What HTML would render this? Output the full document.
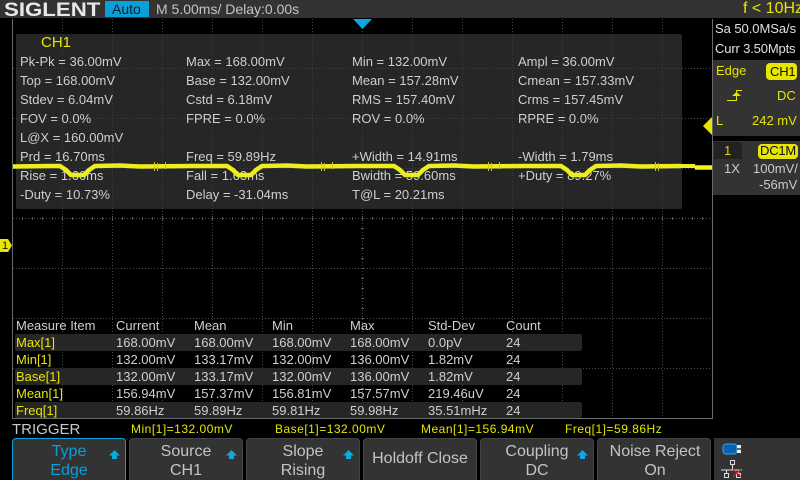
<!DOCTYPE html>
<html><head><meta charset="utf-8"><style>
html,body{margin:0;padding:0;background:#000}
#r{position:relative;width:800px;height:480px;overflow:hidden;background:#000;font-family:"Liberation Sans",sans-serif;color:#d8d8d8}
.t{position:absolute;white-space:nowrap;line-height:16px;height:16px}
.m{font-size:13px;color:#cfcfcf}
.y{color:#e6e600}
.b{position:absolute;background:#333}
.s{font-size:12px;color:#e6e600;letter-spacing:.5px}
.btn{position:absolute;top:438px;width:114px;height:42px;background:#333;border:1px solid #444;border-bottom:0;border-radius:4px 4px 0 0;box-sizing:border-box;text-align:center;font-size:16px;line-height:19px;color:#c4c4c4;padding-top:3px}
</style></head><body><div id="r">

<div class="b" style="left:0;top:0;width:800px;height:18px;background:#333"></div>
<div class="t" style="left:4px;top:0;height:20px;line-height:20px;font-size:19px;font-weight:bold;color:#e8e8e8;transform:translateY(1px) scaleX(1.17);transform-origin:left">SIGLENT</div>
<div class="b" style="left:105px;top:1px;width:44px;height:16px;background:#0a9fd8"></div>
<div class="t" style="left:112px;top:1px;font-size:14px;color:#10202c">Auto</div>
<div class="t" style="left:156px;top:1px;font-size:14px;color:#c4c4c4">M 5.00ms/ Delay:0.00s</div>
<div class="t" style="left:743px;top:1px;font-size:16px;color:#e6e600">f &lt; 10Hz</div>

<svg width="800" height="480" style="position:absolute;left:0;top:0">
<g stroke="#484848" stroke-width="1" stroke-dasharray="1 2" fill="none">
<path d="M62.500 19V418M112.500 19V418M162.500 19V418M212.500 19V418M262.500 19V418M312.500 19V418M362.500 19V418M412.500 19V418M462.500 19V418M512.500 19V418M562.500 19V418M612.500 19V418M662.500 19V418"/>
<path d="M13 68.500H712M13 118.500H712M13 168.500H712M13 218.500H712M13 268.500H712M13 318.500H712M13 368.500H712"/>
</g>
<g stroke="#555" stroke-width="1" fill="none">
<path d="M22.500 217V220M32.500 217V220M42.500 217V220M52.500 217V220M62.500 216V221M72.500 217V220M82.500 217V220M92.500 217V220M102.500 217V220M112.500 216V221M122.500 217V220M132.500 217V220M142.500 217V220M152.500 217V220M162.500 216V221M172.500 217V220M182.500 217V220M192.500 217V220M202.500 217V220M212.500 216V221M222.500 217V220M232.500 217V220M242.500 217V220M252.500 217V220M262.500 216V221M272.500 217V220M282.500 217V220M292.500 217V220M302.500 217V220M312.500 216V221M322.500 217V220M332.500 217V220M342.500 217V220M352.500 217V220M362.500 216V221M372.500 217V220M382.500 217V220M392.500 217V220M402.500 217V220M412.500 216V221M422.500 217V220M432.500 217V220M442.500 217V220M452.500 217V220M462.500 216V221M472.500 217V220M482.500 217V220M492.500 217V220M502.500 217V220M512.500 216V221M522.500 217V220M532.500 217V220M542.500 217V220M552.500 217V220M562.500 216V221M572.500 217V220M582.500 217V220M592.500 217V220M602.500 217V220M612.500 216V221M622.500 217V220M632.500 217V220M642.500 217V220M652.500 217V220M662.500 216V221M672.500 217V220M682.500 217V220M692.500 217V220M702.500 217V220"/>
<path d="M361 228.500H364M361 238.500H364M361 248.500H364M361 258.500H364M361 278.500H364M361 288.500H364M361 298.500H364M361 308.500H364M361 328.500H364M361 338.500H364M361 348.500H364M361 358.500H364M361 378.500H364M361 388.500H364M361 398.500H364M361 408.500H364M361 268.500H364M361 318.500H364M361 368.500H364"/>
</g>
<path d="M12.500 19V418.500H712.500V19" stroke="#6a6a6a" fill="none"/>
<path d="M353 19H372L362.500 29Z" fill="#12a5e0"/>
</svg>

<div class="b" style="left:16px;top:34px;width:666px;height:175px;background:#262626;border-radius:2px"></div>
<svg width="800" height="480" style="position:absolute;left:0;top:0">
<g stroke="#3e3e3e" stroke-width="1" stroke-dasharray="1 2" fill="none">
<path d="M62.500 34V209M112.500 34V209M162.500 34V209M212.500 34V209M262.500 34V209M312.500 34V209M362.500 34V209M412.500 34V209M462.500 34V209M512.500 34V209M562.500 34V209M612.500 34V209M662.500 34V209"/>
<path d="M16 68.500H682M16 118.500H682M16 168.500H682"/>
</g>
</svg>

<div class="t y" style="left:41px;top:35px;font-size:15px">CH1</div>

<div class="t m" style="left:20px;top:54px">Pk-Pk = 36.00mV</div><div class="t m" style="left:186px;top:54px">Max = 168.00mV</div><div class="t m" style="left:352px;top:54px">Min = 132.00mV</div><div class="t m" style="left:518px;top:54px">Ampl = 36.00mV</div>
<div class="t m" style="left:20px;top:73px">Top = 168.00mV</div><div class="t m" style="left:186px;top:73px">Base = 132.00mV</div><div class="t m" style="left:352px;top:73px">Mean = 157.28mV</div><div class="t m" style="left:518px;top:73px">Cmean = 157.33mV</div>
<div class="t m" style="left:20px;top:92px">Stdev = 6.04mV</div><div class="t m" style="left:186px;top:92px">Cstd = 6.18mV</div><div class="t m" style="left:352px;top:92px">RMS = 157.40mV</div><div class="t m" style="left:518px;top:92px">Crms = 157.45mV</div>
<div class="t m" style="left:20px;top:111px">FOV = 0.0%</div><div class="t m" style="left:186px;top:111px">FPRE = 0.0%</div><div class="t m" style="left:352px;top:111px">ROV = 0.0%</div><div class="t m" style="left:518px;top:111px">RPRE = 0.0%</div>
<div class="t m" style="left:20px;top:130px">L@X = 160.00mV</div>
<div class="t m" style="left:20px;top:149px">Prd = 16.70ms</div><div class="t m" style="left:186px;top:149px">Freq = 59.89Hz</div><div class="t m" style="left:352px;top:149px">+Width = 14.91ms</div><div class="t m" style="left:518px;top:149px">-Width = 1.79ms</div>
<div class="t m" style="left:20px;top:168px">Rise = 1.66ms</div><div class="t m" style="left:186px;top:168px">Fall = 1.63ms</div><div class="t m" style="left:352px;top:168px">Bwidth = 59.60ms</div><div class="t m" style="left:518px;top:168px">+Duty = 89.27%</div>
<div class="t m" style="left:20px;top:187px">-Duty = 10.73%</div><div class="t m" style="left:186px;top:187px">Delay = -31.04ms</div><div class="t m" style="left:352px;top:187px">T@L = 20.21ms</div>

<svg width="800" height="480" style="position:absolute;left:0;top:0">
<g fill="none" stroke="#eded20" stroke-width="4.500" stroke-linejoin="round">
<path d="M13 166.500L50 166L60 166L66 170L71 175L84 175L89 170L95 166L120 165.500L140 166.500L190 166L227 166L233 170L238 175L251 175L256 170L262 166L287 165.500L307 166.500L357 166L394 166L400 170L405 175L418 175L423 170L429 166L454 165.500L474 166.500L524 166L561 166L567 170L572 175L585 175L590 170L596 166L621 165.500L641 166.500L681 166"/>
</g>
<path d="M681 166H695" stroke="#eded20" stroke-width="4" fill="none"/>
<path d="M695 167.500H712" stroke="#f5f510" stroke-width="4.500" fill="none"/>
<g stroke="#c8c820" stroke-width="1" fill="none">
<path d="M154.500 162V171M157.500 163V171M165.500 162V169M321.500 162V171M324.500 163V171M332.500 162V169M488.500 162V171M491.500 163V171M499.500 162V169M655.500 162V171M658.500 163V171"/>
</g>
<path d="M0 239H8L12 245.500L8 252H0Z" fill="#e6e600"/>
<path d="M712 117V135L703 126Z" fill="#e6e600"/>
</svg>
<div class="t" style="left:2px;top:238px;font-size:11px;color:#111">1</div>

<div class="b" style="left:15px;top:334px;width:567px;height:17px;background:#262626;border-radius:2px"></div>
<div class="b" style="left:15px;top:368px;width:567px;height:17px;background:#262626;border-radius:2px"></div>
<div class="b" style="left:15px;top:402px;width:567px;height:16px;background:#262626;border-radius:2px"></div>

<div class="t m" style="left:16px;top:318px">Measure Item</div><div class="t m" style="left:116px;top:318px">Current</div><div class="t m" style="left:194px;top:318px">Mean</div><div class="t m" style="left:272px;top:318px">Min</div><div class="t m" style="left:350px;top:318px">Max</div><div class="t m" style="left:428px;top:318px">Std-Dev</div><div class="t m" style="left:506px;top:318px">Count</div>

<div class="t m" style="left:16px;top:335px;color:#e6e600">Max[1]</div><div class="t m" style="left:116px;top:335px">168.00mV</div><div class="t m" style="left:194px;top:335px">168.00mV</div><div class="t m" style="left:272px;top:335px">168.00mV</div><div class="t m" style="left:350px;top:335px">168.00mV</div><div class="t m" style="left:428px;top:335px">0.0pV</div><div class="t m" style="left:506px;top:335px">24</div>
<div class="t m" style="left:16px;top:352px;color:#e6e600">Min[1]</div><div class="t m" style="left:116px;top:352px">132.00mV</div><div class="t m" style="left:194px;top:352px">133.17mV</div><div class="t m" style="left:272px;top:352px">132.00mV</div><div class="t m" style="left:350px;top:352px">136.00mV</div><div class="t m" style="left:428px;top:352px">1.82mV</div><div class="t m" style="left:506px;top:352px">24</div>
<div class="t m" style="left:16px;top:369px;color:#e6e600">Base[1]</div><div class="t m" style="left:116px;top:369px">132.00mV</div><div class="t m" style="left:194px;top:369px">133.17mV</div><div class="t m" style="left:272px;top:369px">132.00mV</div><div class="t m" style="left:350px;top:369px">136.00mV</div><div class="t m" style="left:428px;top:369px">1.82mV</div><div class="t m" style="left:506px;top:369px">24</div>
<div class="t m" style="left:16px;top:386px;color:#e6e600">Mean[1]</div><div class="t m" style="left:116px;top:386px">156.94mV</div><div class="t m" style="left:194px;top:386px">157.37mV</div><div class="t m" style="left:272px;top:386px">156.81mV</div><div class="t m" style="left:350px;top:386px">157.57mV</div><div class="t m" style="left:428px;top:386px">219.46uV</div><div class="t m" style="left:506px;top:386px">24</div>
<div class="t m" style="left:16px;top:403px;color:#e6e600">Freq[1]</div><div class="t m" style="left:116px;top:403px">59.86Hz</div><div class="t m" style="left:194px;top:403px">59.89Hz</div><div class="t m" style="left:272px;top:403px">59.81Hz</div><div class="t m" style="left:350px;top:403px">59.98Hz</div><div class="t m" style="left:428px;top:403px">35.51mHz</div><div class="t m" style="left:506px;top:403px">24</div>

<div class="t" style="left:12px;top:422px;font-size:15px;color:#c8c8c8">TRIGGER</div>
<div class="t s" style="left:131px;top:421px">Min[1]=132.00mV</div>
<div class="t s" style="left:275px;top:421px">Base[1]=132.00mV</div>
<div class="t s" style="left:421px;top:421px">Mean[1]=156.94mV</div>
<div class="t s" style="left:565px;top:421px">Freq[1]=59.86Hz</div>

<div class="btn" style="left:12px;border:1px solid #0a9fd8;border-bottom:0;color:#0a9fd8">Type<br>Edge</div>
<div class="btn" style="left:129px">Source<br>CH1</div>
<div class="btn" style="left:246px">Slope<br>Rising</div>
<div class="btn" style="left:363px;line-height:36px;padding-top:2px">Holdoff Close</div>
<div class="btn" style="left:480px">Coupling<br>DC</div>
<div class="btn" style="left:597px;padding-left:2px">Noise Reject<br>On</div>
<div class="b" style="left:714px;top:438px;width:86px;height:42px"></div>

<svg width="800" height="480" style="position:absolute;left:0;top:0">
<g fill="#12a5e0">
<path d="M114.500 450L120 455.500H117V459H112V455.500H109Z"/>
<path d="M231.500 450L237 455.500H234V459H229V455.500H226Z"/>
<path d="M348.500 450L354 455.500H351V459H346V455.500H343Z"/>
<path d="M582.500 450L588 455.500H585V459H580V455.500H577Z"/>
</g>
<rect x="723" y="444" width="14" height="10" rx="3" fill="#0a63b0" stroke="#3aa0e8"/>
<rect x="737" y="445" width="4" height="8" fill="#eee"/><path d="M737 449H741" stroke="#333" stroke-width="1.500"/>
<g fill="none" stroke="#ddd"><rect x="730.500" y="460.500" width="4" height="4"/><path d="M732.500 465V470M721 470H742M726.500 470V473M738.500 470V473"/><rect x="724.500" y="473.500" width="4" height="4"/><rect x="736.500" y="473.500" width="4" height="4"/></g>
<path d="M733 469L741 477M741 469L733 477" stroke="#e02020" stroke-width="1.200"/>
</svg>

<div class="b" style="left:713px;top:19px;width:87px;height:40px;background:#000"></div>
<div class="t" style="left:715px;top:21px;font-size:13px;color:#e0e0e0;letter-spacing:-.05px">Sa 50.0MSa/s</div>
<div class="t" style="left:715px;top:41px;font-size:13px;color:#e0e0e0;letter-spacing:-.15px">Curr 3.50Mpts</div>

<div class="b" style="left:713px;top:60px;width:87px;height:76px"></div>
<div class="t y" style="left:716px;top:63px;font-size:13px">Edge</div>
<div class="b" style="left:766px;top:63px;width:31px;height:17px;background:#e6e600;border-radius:4px"></div>
<div class="t" style="left:770px;top:64px;font-size:13px;letter-spacing:-.2px;color:#111">CH1</div>
<svg width="800" height="480" style="position:absolute;left:0;top:0">
<path d="M727 100.500H736.500V90.500H742" fill="none" stroke="#e6e600" stroke-width="1"/><path d="M732 96L736.500 92L741 96Z" fill="#e6e600"/>
</svg>
<div class="t y" style="left:777px;top:88px;font-size:13px">DC</div>
<div class="t y" style="left:716px;top:113px;font-size:13px">L</div>
<div class="t y" style="left:752px;top:113px;font-size:13px">242 mV</div>

<div class="b" style="left:713px;top:141px;width:87px;height:54px"></div>
<div class="b" style="left:714px;top:142px;width:28px;height:17px;background:#222;border-radius:0 4px 0 0"></div>
<div class="t" style="left:724px;top:143px;font-size:13px;color:#d8d800">1</div>
<div class="b" style="left:758px;top:144px;width:40px;height:15px;background:#e6e600;border-radius:4px"></div>
<div class="t" style="left:760px;top:143px;font-size:13px;letter-spacing:-.2px;color:#111">DC1M</div>
<div class="t" style="left:724px;top:161px;font-size:13px;color:#ccc">1X</div>
<div class="t" style="left:753px;top:161px;font-size:13px;color:#ccc">100mV/</div>
<div class="t" style="left:759px;top:177px;font-size:13px;color:#ccc">-56mV</div>

</div></body></html>
